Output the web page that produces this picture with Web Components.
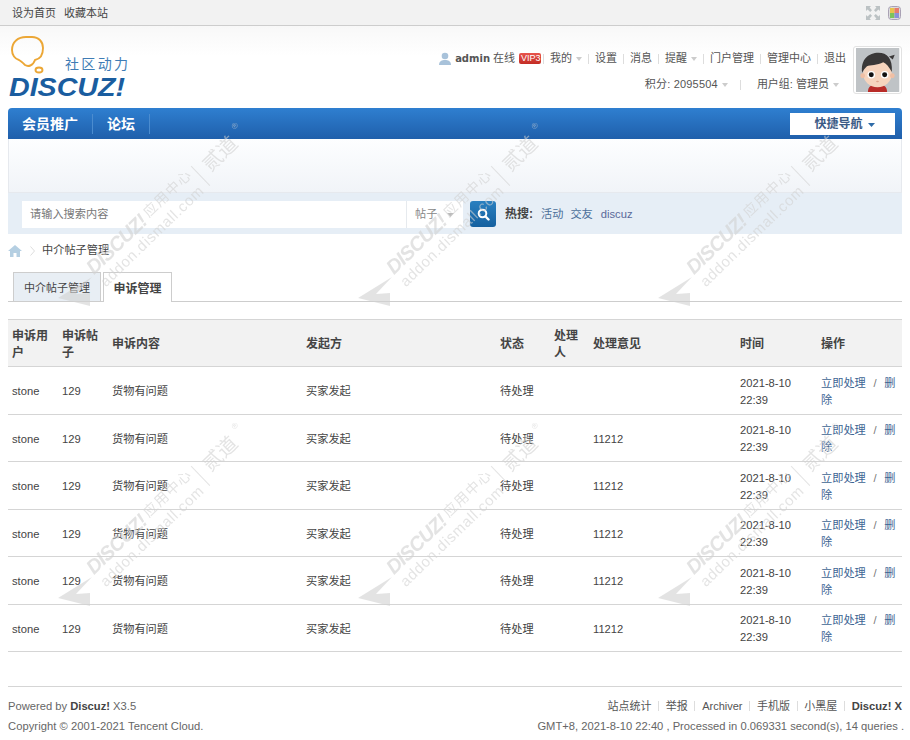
<!DOCTYPE html>
<html lang="zh"><head><meta charset="utf-8"><title>申诉管理</title>
<style>
html,body{margin:0;padding:0;background:#fff}
body{width:910px;height:740px;overflow:hidden;position:relative;font:11.2px/17px "Liberation Sans","Noto Sans CJK SC",sans-serif;color:#444}
</style></head><body>
<x-topbar></x-topbar>
<x-header></x-header>
<x-nav></x-nav>
<x-banner></x-banner>
<x-search></x-search>
<x-crumb></x-crumb>
<x-tabs></x-tabs>
<x-table></x-table>
<x-footer></x-footer>
<x-watermark></x-watermark>
<script>
function def(name,html,init){customElements.define(name,class extends HTMLElement{constructor(){super();this.attachShadow({mode:'open'}).innerHTML=html;}connectedCallback(){if(init&&!this._i){this._i=1;init(this.shadowRoot);}}});}
const arrow='<svg width="6" height="4" viewBox="0 0 6 4"><path d="M0 0h6L3 4z" fill="#ccc"/></svg>';
def('x-topbar',`<style>:host{display:flex;justify-content:space-between;align-items:center;height:25px;border-bottom:1px solid #cdcdcd;background:#f2f2f2;padding:0 9px 0 12px;color:#444;font-size:11px}
.l{display:flex;gap:8px;padding-top:2px}.r{display:flex;gap:8px;align-items:center}svg{display:block}</style>
<div class="l"><span>设为首页</span><span>收藏本站</span></div>
<div class="r"><svg width="14" height="14" viewBox="0 0 14 14" fill="#bcc2c4"><path d="M0 0h5L3.600 1.600 6 4.200 4.200 6 1.600 3.600 0 5zM14 0v5L12.400 3.600 9.800 6 8 4.200 10.400 1.600 9 0zM0 14V9l1.600 1.400L4.200 8 6 9.800 3.600 12.400 5 14zM14 14H9l1.400-1.600L8 9.800 9.800 8l2.600 2.400L14 9z"/></svg>
<svg width="13" height="14" viewBox="0 0 13 14"><rect x=".5" y=".5" width="12" height="13" rx="3" fill="#ddd" stroke="#a9a1b4"/><g style="filter:blur(.6px)"><rect x="2" y="2" width="4.500" height="5" fill="#e9c34c"/><rect x="6.500" y="2" width="4.500" height="5" fill="#e77b6e"/><rect x="2" y="7" width="4.500" height="5" fill="#7cc35c"/><rect x="6.500" y="7" width="4.500" height="5" fill="#8b8fd8"/></g></svg></div>`);
def('x-header',`<style>:host{display:flex;justify-content:space-between;height:82px;padding:0 8px;background:linear-gradient(#f8f8f8,#fff 30px);box-sizing:border-box}
.logo{margin-top:10px;width:126px;height:64px;display:block;overflow:visible}
.right{display:flex;gap:7px;padding-top:20px}
.info{display:flex;flex-direction:column;align-items:flex-end;gap:9px;color:#555;padding-top:4px;font-size:11px}
.row{display:flex;align-items:center;height:17px;white-space:nowrap}
.row i{display:block;width:1px;height:10px;background:#ddd;margin:0 6px}
.row svg{display:block}
.row .ar{margin-left:4px}
b{color:#555;font-family:"DejaVu Sans","Liberation Sans",sans-serif;font-size:10px}
.vip{font:9px/11px "Liberation Sans",sans-serif;background:linear-gradient(#e8544c,#c22c24);color:#fff;border-radius:2px;padding:0 2px;width:18px;text-align:center;margin-left:4px}
.av{width:44px;height:44px;border:1px solid #e2e2e2;border-radius:3px;padding:1px 1.500px;background:#fff;box-sizing:content-box}
.row2{padding-right:7px}.pts{letter-spacing:.2px}
</style>
<svg class="logo" viewBox="0 0 126 64">
<path d="M4 14C4 6 10 1 18 1h6C31 1 35 6 35 12 35 19 32 23 27 24 25 30 20 31 17 29 15 27 13 25 11 24 7 23 4 19 4 14z" fill="none" stroke="#eca736" stroke-width="1.900"/>
<ellipse cx="31" cy="34" rx="3.500" ry="2.500" fill="none" stroke="#eca736" stroke-width="1.900"/>
<text x="57" y="33" font-family="Liberation Sans,Noto Sans CJK SC,sans-serif" font-size="14" fill="#3f7cb5" textLength="63">社区动力</text>
<text x="1" y="60" font-family="Liberation Sans,sans-serif" font-size="26" font-weight="700" font-style="italic" fill="#1a5d9f" textLength="116" lengthAdjust="spacingAndGlyphs">DISCUZ!</text>
</svg>
<div class="right"><div class="info">
<div class="row"><svg width="12" height="14" viewBox="0 0 12 14" style="margin-right:4px"><circle cx="6" cy="4" r="3.300" fill="#a8c2da"/><path d="M0 13c0-4 3-5 6-5s6 1 6 5z" fill="#a8c2da"/></svg><b>admin</b><span style="margin-left:3px">在线</span><span class="vip">VIP3</span><i style="margin:0 6px 0 2px"></i><span>我的</span><span class="ar">${arrow}</span><i></i><span>设置</span><i></i><span>消息</span><i></i><span>提醒</span><span class="ar">${arrow}</span><i></i><span>门户管理</span><i></i><span>管理中心</span><i></i><span>退出</span></div>
<div class="row row2"><span class="pts">积分: 2095504</span><span class="ar">${arrow}</span><i style="margin:0 16px 0 12px"></i><span>用户组: 管理员</span><span class="ar">${arrow}</span></div>
</div>
<svg class="av" width="44" height="44" viewBox="0 0 46 46"><rect width="46" height="46" fill="#bfc3c6"/><path d="M13 46c0-6 4-8 10-8s10 2 10 8z" fill="#b92c28"/><ellipse cx="23" cy="27" rx="15" ry="14" fill="#f6d4bd"/><circle cx="7.500" cy="29" r="2.500" fill="#f0bfa4"/><circle cx="38.500" cy="29" r="2.500" fill="#f0bfa4"/><path d="M7 26C5 12 14 5 24 5c9 0 15 6 14 20-3-5-6-9-9-10-6 3-14 3-17 4-2 2-4 4-5 7z" fill="#3a3838"/><path d="M35 9l6-2-2 5z" fill="#3a3838"/><circle cx="16.500" cy="28" r="4" fill="#fff"/><circle cx="16.500" cy="28" r="2.600" fill="#111"/><circle cx="30.500" cy="28" r="4" fill="#fff"/><circle cx="30.500" cy="28" r="2.600" fill="#111"/><ellipse cx="23" cy="35" rx="1.500" ry=".8" fill="#e0a58c"/></svg>
</div>`);
def('x-nav',`<style>:host{display:flex;margin:0 8px;height:31px;box-sizing:border-box;align-items:center;justify-content:space-between;background:linear-gradient(#2f7fd0,#1f5fab);border-radius:4px 4px 0 0;padding-right:7px;color:#fff}
.items{display:flex}.it{font-size:14px;font-weight:700;padding:0 14px;border-right:1px solid #4b8ccf;line-height:20px}
.btn{width:105px;height:22px;margin-top:1px;padding-top:1px;background:#fff;color:#3a5a85;font-size:12px;font-weight:700;display:flex;align-items:center;justify-content:center;gap:5px;padding-left:4px;box-sizing:border-box}
</style><div class="items"><span class="it">会员推广</span><span class="it">论坛</span></div>
<div class="btn"><span>快捷导航</span><svg width="7" height="4" viewBox="0 0 7 4"><path d="M0 0h7L3.500 4z" fill="#2e6ba8"/></svg></div>`);
def('x-banner',`<style>:host{display:block;margin:0 8px;height:54px;background:linear-gradient(#fdfeff,#f1f4f8);border:solid #e6e9ee;border-width:0 1px 1px;box-sizing:border-box}</style>`);
def('x-search',`<style>:host{display:flex;align-items:center;margin:0 8px;height:41px;background:#e6eef6;padding:1px 0 0 14px;box-sizing:border-box}
.box{display:flex;align-items:center;width:441px;height:27px;background:#fff;box-sizing:border-box}
.ph{flex:1;padding:1px 0 0 8px;color:#777}
.sel{width:57px;height:27px;padding-top:1px;border-left:1px solid #e6eaee;box-sizing:border-box;display:flex;align-items:center;padding-left:8px;color:#888;gap:10px}
.go{width:26px;height:26px;margin-left:7px;background:linear-gradient(#2a80c0,#15609f);border-radius:3px;display:flex;align-items:center;justify-content:center}
.hot{margin-left:9px;color:#444;font-weight:700;font-size:12px}
a{color:#4a6f99;margin-left:7px}.hot+a{margin-left:8px}svg{display:block}
a:last-child{margin-left:8px;color:#5a6a9a}
</style><div class="box"><span class="ph">请输入搜索内容</span><div class="sel"><span>帖子</span><svg width="7" height="4" viewBox="0 0 7 4"><path d="M0 0h7L3.500 4z" fill="#bbb"/></svg></div></div>
<div class="go"><svg width="13" height="13" viewBox="0 0 13 13"><circle cx="5.500" cy="5.500" r="3.800" fill="none" stroke="#fff" stroke-width="2"/><path d="M8.500 8.500l3 3" stroke="#fff" stroke-width="2.400" stroke-linecap="round"/></svg></div>
<span class="hot">热搜:</span><a>活动</a><a>交友</a><a>discuz</a>`);
def('x-crumb',`<style>:host{display:flex;align-items:center;margin:0 8px;height:38px;padding-bottom:5px;box-sizing:border-box;color:#444}
svg{display:block}.s{margin:0 7px 0 8px}</style>
<svg width="14" height="12" viewBox="0 0 14 12"><path d="M7 0l7 6h-2v6H8.500V8h-3v4H2V6H0z" fill="#b5cfe2"/></svg>
<svg class="s" width="5" height="10" viewBox="0 0 5 10"><path d="M.5.500l4 4.500-4 4.500" fill="none" stroke="#ddd"/></svg><span>中介帖子管理</span>`);
def('x-tabs',`<style>:host{display:flex;margin:0 8px;height:30px;padding-left:5px;border-bottom:1px solid #cdcdcd;box-sizing:border-box;align-items:flex-end;gap:2px}
.t{height:29px;padding-top:3px;display:flex;align-items:center;justify-content:center;box-sizing:border-box;border:1px solid #cdcdcd;border-bottom:0}
.a{width:88px;background:#e8eef4;color:#444;font-size:11px}
.b{width:69px;background:#fff;font-weight:700;color:#444;font-size:12px;height:30px;margin-bottom:-1px}
</style><div class="t a">中介帖子管理</div><div class="t b">申诉管理</div>`);
def('x-table',`<style>:host{display:block;margin:17px 8px 0}
table{border-collapse:collapse;table-layout:fixed;width:894px;color:#444}
th{background:#f2f2f2;font-size:12px;font-weight:700;text-align:left;padding:3px 4px 0;height:47px;border-top:1px solid #d5d5d5;border-bottom:1px solid #d5d5d5;line-height:17px;box-sizing:border-box}
td{padding:3px 4px 0;height:47.5px;border-bottom:1px solid #d5d5d5;box-sizing:border-box;line-height:17px}
a{color:#3d6593}.sep{color:#777;padding:0 1.500px}
</style><table><colgroup><col style="width:50px"><col style="width:50px"><col style="width:194px"><col style="width:194px"><col style="width:54px"><col style="width:39px"><col style="width:147px"><col style="width:81px"><col style="width:85px"></colgroup>
<thead><tr><th>申诉用户</th><th>申诉帖子</th><th>申诉内容</th><th>发起方</th><th>状态</th><th>处理人</th><th>处理意见</th><th>时间</th><th>操作</th></tr></thead><tbody></tbody></table>`,
r=>{const b=r.querySelector('tbody');for(let i=0;i<6;i++){const tr=document.createElement('tr');tr.innerHTML=`<td>stone</td><td>129</td><td>货物有问题</td><td>买家发起</td><td>待处理</td><td></td><td>${i?'11212':''}</td><td>2021-8-10 22:39</td><td><a>立即处理</a><span class="sep">&nbsp;&nbsp;/&nbsp;&nbsp;</span><a>删除</a>`;b.appendChild(tr);}});
def('x-footer',`<style>:host{display:block;margin:34px 8px 0;border-top:1px solid #d5d5d5;padding-top:9px;color:#666}
.r{display:flex;justify-content:space-between;height:20px;align-items:center;white-space:nowrap}
b{color:#444}.links{display:flex;align-items:center;color:#555;font-size:11px}.links b{font-size:11.200px}i{display:block;width:1px;height:10px;background:#ddd;margin:0 6.700px}
.c{letter-spacing:.06px}.g{margin-right:-2px}
</style><div class="r"><span>Powered by <b>Discuz!</b> X3.5</span><div class="links"><span>站点统计</span><i></i><span>举报</span><i></i><span>Archiver</span><i></i><span>手机版</span><i></i><span>小黑屋</span><i></i><b>Discuz! X</b></div></div>
<div class="r"><span class="c">Copyright © 2001-2021 Tencent Cloud.</span><span class="g">GMT+8, 2021-8-10 22:40 , Processed in 0.069331 second(s), 14 queries .</span></div>`);
const tile=`<svg width="300" height="300" viewBox="0 0 300 300"><g fill="#d2d2d2" opacity=".6">
<path d="M8 188L42 167 26 184 40 183 40 196z"/>
<g transform="translate(42 163) rotate(-44)"><text x="0" y="3" font-family="Liberation Sans,sans-serif" font-size="20" font-style="italic" font-weight="700" textLength="76">DISCUZ!</text><text x="79" y="0" font-family="Noto Sans CJK SC,sans-serif" font-size="14" textLength="60">应用中心</text><rect x="145" y="-8" width="1" height="27"/><text x="155" y="10" font-family="Noto Sans CJK SC,sans-serif" font-size="20" textLength="40">贰道</text><text x="202" y="-4" font-family="Liberation Sans,sans-serif" font-size="8">®</text>
<text x="0" y="20" font-family="Liberation Sans,sans-serif" font-size="15" textLength="137">addon.dismall.com</text></g></g></svg>`;
def('x-watermark',`<style>:host{position:absolute;left:50px;top:110px;display:grid;grid-template-columns:repeat(3,300px);grid-auto-rows:300px;pointer-events:none}svg{display:block}</style>${tile.repeat(6)}`);
</script></body></html>
